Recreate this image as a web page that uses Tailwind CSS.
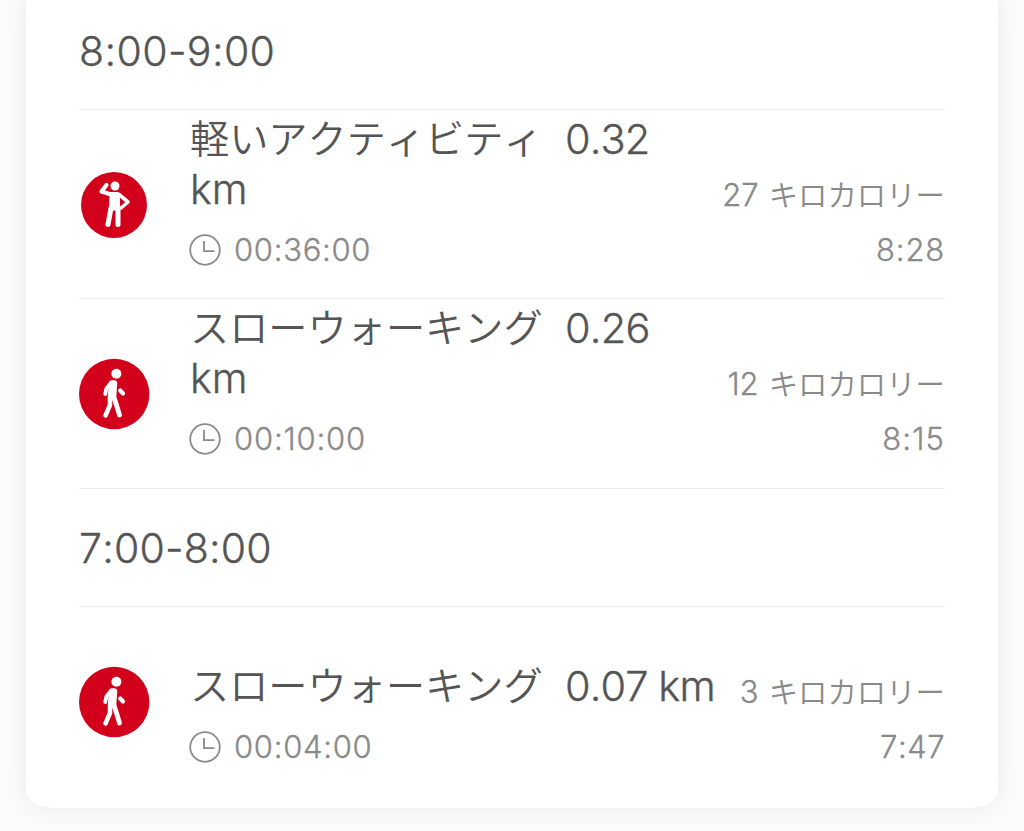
<!DOCTYPE html>
<html lang="ja">
<head>
<meta charset="utf-8">
<title>アクティビティ</title>
<script src="https://cdn.jsdelivr.net/npm/@tailwindcss/browser@4"></script>
</head>
<body class="h-[831px] overflow-hidden bg-[#fbfbfb] font-['Inter','Noto_Sans_CJK_JP',sans-serif] font-[350] text-[#555] [font-kerning:none] [-webkit-text-stroke:0.35px]">
<svg class="hidden">
  <symbol id="clock" viewBox="0 0 32 32"><g fill="none" stroke="#8a8a8a" stroke-width="1.8"><circle cx="16" cy="16" r="14.8"/><path d="M15 7v10.2h10.5"/></g></symbol>
  <symbol id="walk" viewBox="0 0 72 72"><circle cx="35.2" cy="36" r="35.2" fill="#d2001a"/><circle cx="37.4" cy="15.700" r="5" fill="#fff"/><g fill="none" stroke="#fff" stroke-linecap="round" stroke-linejoin="round"><path d="M31 26L27.400 30.500L26.200 36" stroke-width="3.800"/><path d="M33 25.500H35L34 39H32Z" fill="#fff" stroke-width="6.500"/><path d="M34.500 38L37.500 47L40.500 57" stroke-width="4.800"/><path d="M31 40L31 47L26.500 57.500" stroke-width="4.500"/><path d="M41.200 32.500L44 35.500" stroke-width="4.200"/></g></symbol>
</svg>
<main class="ml-[26px] h-[808px] w-[972px] rounded-b-[30px_16px] bg-white px-[53px] shadow-[0_0_24px_rgba(0,0,0,0.07)]">
  <h2 class="h-[110px] border-b border-[#ececec] pt-[26px] text-[41px] leading-[50px] font-[350] tracking-[0.4px]">8:00-9:00</h2>
  <section class="flex h-[189px] border-b border-[#ececec]">
    <svg class="mt-[59px] h-[72px] w-[72px] shrink-0" viewBox="0 0 72 72"><circle cx="35" cy="36" r="33" fill="#d2001a"/><circle cx="36" cy="17" r="4.500" fill="#fff"/><g fill="none" stroke="#fff" stroke-linecap="round" stroke-linejoin="round"><path d="M27.500 16L22.500 22.500L32 25.500" stroke-width="4.200"/><path d="M32 25L40 25.500L49 33L42 39" stroke-width="3.600"/><path d="M33 25.500H38.500V39H32.500Z" fill="#fff" stroke-width="5"/><path d="M32 39L29 55.500M39 39V55.500" stroke-width="5"/></g></svg>
    <div class="ml-[39px] flex grow flex-col whitespace-nowrap">
      <div class="flex h-[50px] items-baseline text-[41.500px] leading-[58px]"><span class="w-[375px] -translate-y-px text-[39.200px] [-webkit-text-stroke:0]">軽いアクティビティ</span><span class="tracking-[-0.9px]">0.32</span></div>
      <div class="flex h-[60px] items-baseline justify-between"><span class="text-[41px] leading-[58px]">km</span><span class="flex translate-y-[2px] items-baseline text-[31px] text-[#8a8a8a]">27<span class="ml-[10px] text-[29.400px] [-webkit-text-stroke:0]">キロカロリー</span></span></div>
      <div class="flex items-center justify-between text-[31px] leading-[60px] text-[#8a8a8a]"><span class="flex items-center gap-[13px] tracking-[0.7px]"><svg class="-ml-[1px] -mt-px h-8 w-8"><use href="#clock"/></svg>00:36:00</span><span class="tracking-[0.8px]">8:28</span></div>
    </div>
  </section>
  <section class="flex h-[190px] border-b border-[#ececec]">
    <svg class="mt-[59px] h-[72px] w-[72px] shrink-0"><use href="#walk"/></svg>
    <div class="ml-[39px] flex grow flex-col whitespace-nowrap">
      <div class="flex h-[50px] items-baseline text-[41.500px] leading-[58px]"><span class="w-[375px] -translate-y-px text-[39.200px] [-webkit-text-stroke:0]">スローウォーキング</span><span class="tracking-[-0.8px]">0.26</span></div>
      <div class="flex h-[60px] items-baseline justify-between"><span class="text-[41px] leading-[58px]">km</span><span class="flex translate-y-[2px] items-baseline text-[31px] text-[#8a8a8a]">12<span class="ml-[10px] text-[29.400px] [-webkit-text-stroke:0]">キロカロリー</span></span></div>
      <div class="flex items-center justify-between text-[31px] leading-[60px] text-[#8a8a8a]"><span class="flex items-center gap-[13px] tracking-[0.8px]"><svg class="-ml-[1px] -mt-px h-8 w-8"><use href="#clock"/></svg>00:10:00</span><span class="tracking-[1.1px]">8:15</span></div>
    </div>
  </section>
  <h2 class="h-[118px] border-b border-[#ececec] pt-[34px] text-[41px] leading-[50px] font-[350] tracking-[0.2px]">7:00-8:00</h2>
  <section class="flex">
    <svg class="mt-[59px] h-[72px] w-[72px] shrink-0"><use href="#walk"/></svg>
    <div class="ml-[39px] flex grow flex-col whitespace-nowrap pt-[50px]">
      <div class="flex h-[60px] items-baseline justify-between"><span class="flex items-baseline text-[41.500px] leading-[58px]"><span class="w-[375px] -translate-y-px text-[39.200px] [-webkit-text-stroke:0]">スローウォーキング</span><span class="tracking-[-0.9px]">0.07 km</span></span><span class="flex translate-y-[2px] items-baseline text-[31px] text-[#8a8a8a]">3<span class="ml-[10px] text-[29.400px] [-webkit-text-stroke:0]">キロカロリー</span></span></div>
      <div class="flex items-center justify-between text-[31px] leading-[60px] text-[#8a8a8a]"><span class="flex items-center gap-[13px] tracking-[0.7px]"><svg class="-ml-[1px] -mt-px h-8 w-8"><use href="#clock"/></svg>00:04:00</span><span class="tracking-[0.5px]">7:47</span></div>
    </div>
  </section>
</main>
</body>
</html>
